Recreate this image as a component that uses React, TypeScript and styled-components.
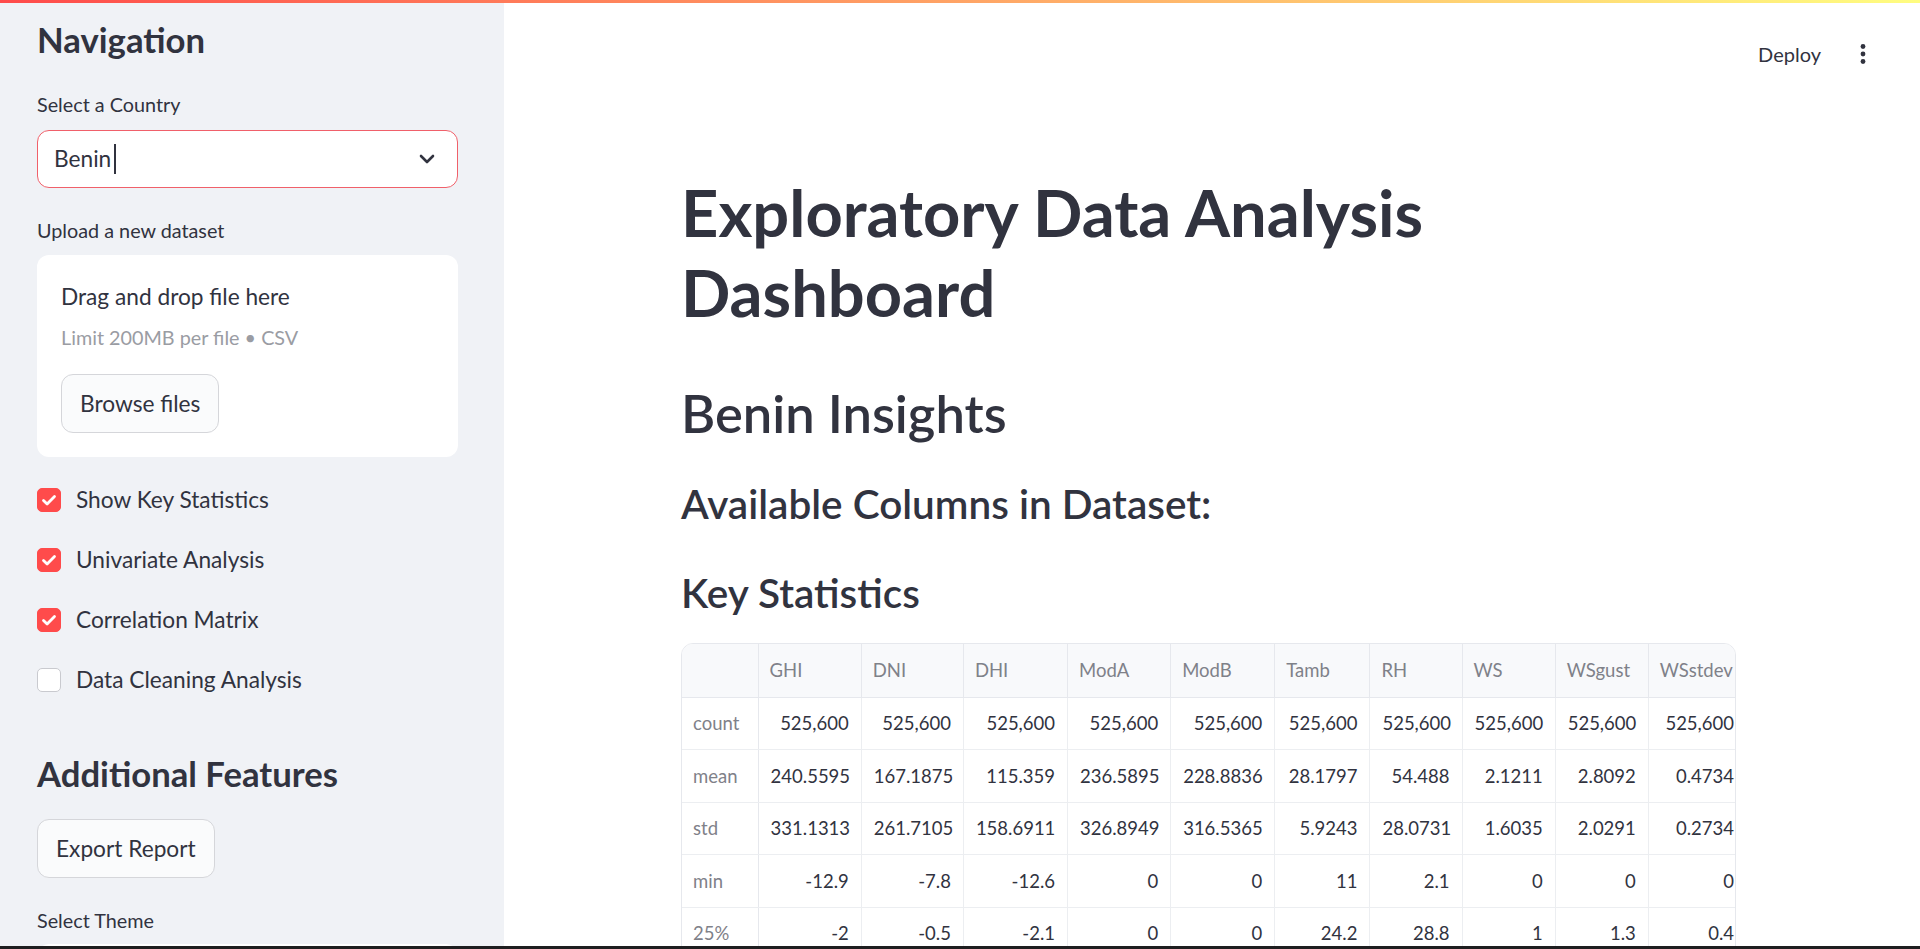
import React from "react";
import styled, { createGlobalStyle } from "styled-components";

const Global = createGlobalStyle`
  html, body { margin: 0; padding: 0; height: 100%; overflow: hidden; background: #ffffff; }
  body { font-family: Lato, "Noto Sans", sans-serif; color: #31333f; }
  #root { height: 100%; }
  * { box-sizing: border-box; }
`;

const Page = styled.div`
  display: flex;
  flex-direction: column;
  height: 100vh;
`;

const Decoration = styled.div`
  height: 3px;
  flex: none;
  background: linear-gradient(90deg, #ff4b4b, #fffd80);
`;

const Body = styled.div`
  flex: 1;
  display: flex;
  min-height: 0;
  overflow: hidden;
`;

const BottomStrip = styled.div`
  height: 3px;
  flex: none;
  background: #1e1e1f;
`;

/* ---------- Sidebar ---------- */
const Sidebar = styled.aside`
  width: 504px;
  flex: none;
  background: #f0f2f6;
  padding: 15px 46px 0 37px;
  display: flex;
  flex-direction: column;
  overflow: hidden;
  & > * { flex-shrink: 0; }
`;

const SideHeading = styled.h2<{ $mt?: number }>`
  margin: ${(p) => p.$mt ?? 0}px 0 0;
  font-size: 34.7px;
  line-height: 44px;
  font-weight: 700;
  color: #31333f;
`;

const FieldLabel = styled.div<{ $mt: number }>`
  margin-top: ${(p) => p.$mt}px;
  font-size: 19.8px;
  line-height: 28px;
  color: #31333f;
`;

const SelectBox = styled.div<{ $focused?: boolean; $mt: number }>`
  margin-top: ${(p) => p.$mt}px;
  height: 58px;
  background: #ffffff;
  border: 1px solid ${(p) => (p.$focused ? "#f0606a" : "#ffffff")};
  border-radius: 12px;
  display: flex;
  align-items: center;
  padding: 0 22px 0 16px;
`;

const SelectValue = styled.span`
  flex: 1;
  font-size: 22.7px;
  line-height: 28px;
  color: #31333f;
  display: flex;
  align-items: center;
`;

const Caret = styled.span`
  display: inline-block;
  width: 2px;
  height: 30px;
  background: #31333f;
  margin-left: 3px;
`;

const Dropzone = styled.div`
  margin-top: 11px;
  background: #ffffff;
  border-radius: 12px;
  padding: 27px 24px 24px;
  display: flex;
  flex-direction: column;
  align-items: flex-start;
`;

const DropTitle = styled.div`
  font-size: 22.7px;
  line-height: 30px;
  color: #31333f;
`;

const DropHint = styled.div`
  margin-top: 11px;
  font-size: 19.8px;
  line-height: 28px;
  color: #9a9ca3;
`;

const SecondaryButton = styled.button<{ $mt: number }>`
  margin-top: ${(p) => p.$mt}px;
  height: 59px;
  flex: none;
  padding: 0 18px;
  font-family: inherit;
  font-size: 22.7px;
  color: #31333f;
  background: #fafbfc;
  border: 1px solid #d5d6da;
  border-radius: 12px;
  align-self: flex-start;
  cursor: pointer;
`;

const CheckList = styled.div`
  margin-top: 31px;
  display: flex;
  flex-direction: column;
  gap: 36px;
`;

const CheckRow = styled.label`
  display: flex;
  align-items: center;
  height: 24px;
  gap: 15px;
  font-size: 22.7px;
  line-height: 24px;
  color: #31333f;
`;

const Box = styled.span<{ $checked: boolean }>`
  width: 24px;
  height: 24px;
  flex: none;
  border-radius: 5px;
  background: ${(p) => (p.$checked ? "#ff4b4b" : "#ffffff")};
  border: 1px solid ${(p) => (p.$checked ? "#ff4b4b" : "#c9cacf")};
  display: flex;
  align-items: center;
  justify-content: center;
`;

/* ---------- Main ---------- */
const Main = styled.main`
  flex: 1;
  min-width: 0;
  display: flex;
  flex-direction: column;
  overflow: hidden;
`;

const TopBar = styled.header`
  height: 102px;
  flex: none;
  display: flex;
  align-items: center;
  justify-content: flex-end;
  gap: 30px;
  padding-right: 45px;
`;

const DeployLink = styled.span`
  font-size: 20px;
  color: #31333f;
`;

const Content = styled.div`
  margin-left: 177px;
  width: 1055px;
  display: flex;
  flex-direction: column;
  flex: none;
`;

const Title = styled.h1`
  margin: 67px 0 0;
  font-size: 65px;
  line-height: 80px;
  font-weight: 700;
  color: #31333f;
`;

const SubTitle = styled.h2<{ $mt: number }>`
  margin: ${(p) => p.$mt}px 0 0;
  font-size: 52.5px;
  line-height: 65px;
  font-weight: 600;
  color: #31333f;
`;

const Section = styled.h3<{ $mt: number }>`
  margin: ${(p) => p.$mt}px 0 0;
  font-size: 40.5px;
  line-height: 50px;
  font-weight: 600;
  color: #31333f;
`;

const TableFrame = styled.div`
  margin-top: 25px;
  width: 1055px;
  border: 1px solid #e6e8ed;
  border-radius: 12px;
  overflow: hidden;
`;

const Grid = styled.table`
  border-collapse: collapse;
  table-layout: fixed;
  width: 1065px;
  font-size: 18.5px;
`;

const HeadCell = styled.th`
  height: 53px;
  padding: 0 11px;
  text-align: left;
  font-weight: 400;
  color: #7f8189;
  background: #f8f9fb;
  border-right: 1px solid #e6e8ed;
  border-bottom: 1px solid #e6e8ed;
  white-space: nowrap;
  overflow: hidden;
`;

const IndexCell = styled.th`
  height: 52.5px;
  padding: 0 11px;
  text-align: left;
  font-weight: 400;
  color: #7f8189;
  border-right: 1px solid #e6e8ed;
  border-bottom: 1px solid #eceef1;
  white-space: nowrap;
`;

const ValueCell = styled.td`
  height: 52.5px;
  padding: 0 12px;
  text-align: right;
  color: #31333f;
  border-right: 1px solid #eceef1;
  border-bottom: 1px solid #eceef1;
  white-space: nowrap;
  overflow: hidden;
`;

const columns = ["GHI", "DNI", "DHI", "ModA", "ModB", "Tamb", "RH", "WS", "WSgust", "WSstdev"];
const colWidths = [76, 103, 102, 104, 103, 104, 95, 92, 93, 93, 98];

const rows: [string, string[]][] = [
  ["count", Array(10).fill("525,600")],
  ["mean", ["240.5595", "167.1875", "115.359", "236.5895", "228.8836", "28.1797", "54.488", "2.1211", "2.8092", "0.4734"]],
  ["std", ["331.1313", "261.7105", "158.6911", "326.8949", "316.5365", "5.9243", "28.0731", "1.6035", "2.0291", "0.2734"]],
  ["min", ["-12.9", "-7.8", "-12.6", "0", "0", "11", "2.1", "0", "0", "0"]],
  ["25%", ["-2", "-0.5", "-2.1", "0", "0", "24.2", "28.8", "1", "1.3", "0.4"]],
];

const Chevron = () => (
  <svg width="16" height="10" viewBox="0 0 16 10" fill="none">
    <path d="M2 2l6 6 6-6" stroke="#31333f" strokeWidth="2.6" strokeLinecap="round" strokeLinejoin="round" />
  </svg>
);

const Check = () => (
  <svg width="18" height="18" viewBox="0 0 18 18" fill="none">
    <path d="M3.5 9.5l3.6 3.6L14.5 5.5" stroke="#ffffff" strokeWidth="2.8" strokeLinecap="round" strokeLinejoin="round" />
  </svg>
);

const Kebab = () => (
  <svg width="24" height="24" viewBox="0 0 24 24" fill="#31333f">
    <circle cx="12" cy="4.5" r="2.4" />
    <circle cx="12" cy="12" r="2.4" />
    <circle cx="12" cy="19.5" r="2.4" />
  </svg>
);

const options: [string, boolean][] = [
  ["Show Key Statistics", true],
  ["Univariate Analysis", true],
  ["Correlation Matrix", true],
  ["Data Cleaning Analysis", false],
];

export default function App() {
  return (
    <>
      <Global />
      <Page>
        <Decoration />
        <Body>
          <Sidebar>
            <SideHeading>Navigation</SideHeading>
            <FieldLabel $mt={28}>Select a Country</FieldLabel>
            <SelectBox $focused $mt={12}>
              <SelectValue>
                Benin
                <Caret />
              </SelectValue>
              <Chevron />
            </SelectBox>
            <FieldLabel $mt={28}>Upload a new dataset</FieldLabel>
            <Dropzone>
              <DropTitle>Drag and drop file here</DropTitle>
              <DropHint>Limit 200MB per file • CSV</DropHint>
              <SecondaryButton $mt={23}>Browse files</SecondaryButton>
            </Dropzone>
            <CheckList>
              {options.map(([label, checked]) => (
                <CheckRow key={label}>
                  <Box $checked={checked}>{checked && <Check />}</Box>
                  {label}
                </CheckRow>
              ))}
            </CheckList>
            <SideHeading $mt={60}>Additional Features</SideHeading>
            <SecondaryButton $mt={23}>Export Report</SecondaryButton>
            <FieldLabel $mt={28}>Select Theme</FieldLabel>
            <SelectBox $mt={10}>
              <SelectValue />
              <Chevron />
            </SelectBox>
          </Sidebar>
          <Main>
            <TopBar>
              <DeployLink>Deploy</DeployLink>
              <Kebab />
            </TopBar>
            <Content>
              <Title>
                Exploratory Data Analysis
                <br />
                Dashboard
              </Title>
              <SubTitle $mt={48}>Benin Insights</SubTitle>
              <Section $mt={34}>Available Columns in Dataset:</Section>
              <Section $mt={39}>Key Statistics</Section>
              <TableFrame>
                <Grid>
                  <colgroup>
                    {colWidths.map((w, i) => (
                      <col key={i} style={{ width: w }} />
                    ))}
                  </colgroup>
                  <thead>
                    <tr>
                      <HeadCell />
                      {columns.map((c) => (
                        <HeadCell key={c}>{c}</HeadCell>
                      ))}
                    </tr>
                  </thead>
                  <tbody>
                    {rows.map(([name, vals]) => (
                      <tr key={name}>
                        <IndexCell>{name}</IndexCell>
                        {vals.map((v, i) => (
                          <ValueCell key={i}>{v}</ValueCell>
                        ))}
                      </tr>
                    ))}
                  </tbody>
                </Grid>
              </TableFrame>
            </Content>
          </Main>
        </Body>
        <BottomStrip />
      </Page>
    </>
  );
}
